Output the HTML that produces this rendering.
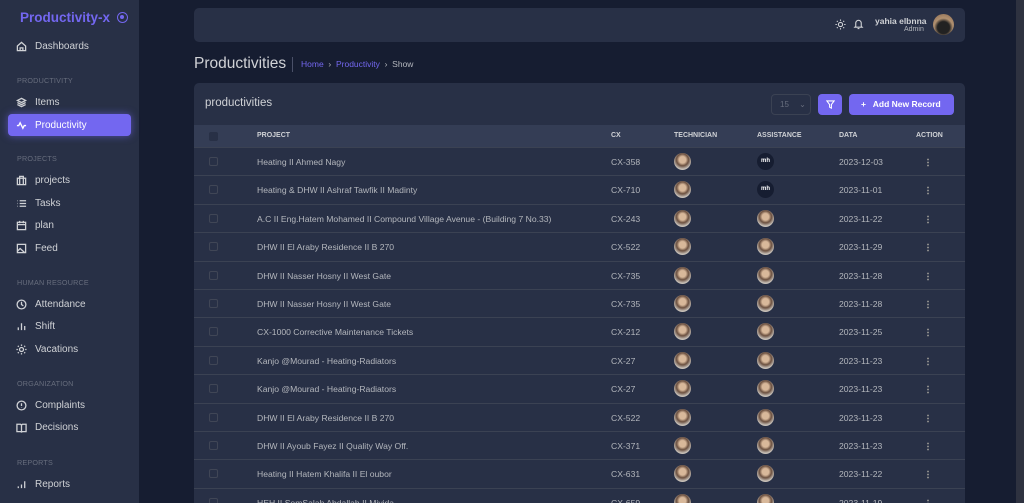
<!DOCTYPE html>
<html style="overflow:hidden;height:503px"><head><style>
*{box-sizing:border-box;margin:0;padding:0}
body{width:1024px;height:503px;overflow:hidden;background:#161d31;font-family:"Liberation Sans",sans-serif;color:#b4b7bd;position:relative}
.sb{position:absolute;left:0;top:0;width:139px;height:503px;background:#283046}
.logo{position:absolute;left:20px;top:10px;color:#7367f0;font-size:13.5px;font-weight:bold}
.tog{position:absolute;left:117px;top:12px;width:11px;height:11px;border:1.5px solid #7367f0;border-radius:50%}
.tog:after{content:"";position:absolute;left:2px;top:2px;width:4px;height:4px;border-radius:50%;background:#7367f0}
.it{position:absolute;left:16px;font-size:10px;color:#d0d2d6;display:flex;align-items:center}
.it svg{width:11px;height:11px;margin-right:8px;stroke:#d0d2d6;fill:none;stroke-width:1.4}
.sec{position:absolute;left:17px;font-size:7.2px;color:#676d7d;letter-spacing:.2px}
.act{position:absolute;left:8px;top:114px;width:123px;height:22px;background:#7367f0;border-radius:4px;box-shadow:0 0 8px rgba(115,103,240,.6);color:#fff;font-size:10px;display:flex;align-items:center;padding-left:8px}
.act svg{width:11px;height:11px;margin-right:8px;stroke:#fff;fill:none;stroke-width:1.5}
.nav{position:absolute;left:194px;top:8px;width:771px;height:34px;background:#283046;border-radius:5px}
.title{position:absolute;left:194px;top:55px;font-size:15.5px;color:#d0d2d6}
.bc{position:absolute;left:292px;top:57px;height:15px;border-left:1px solid #4a5068;padding-left:8px;font-size:8.5px;line-height:15px;color:#b4b7bd}
.bc span{color:#7367f0}
.card{position:absolute;left:194px;top:83px;width:771px;height:420px;background:#283046;border-radius:5px 5px 0 0;overflow:hidden}
.ch{position:absolute;left:11px;top:14px;font-size:11.5px;color:#d0d2d6}
.sel{position:absolute;left:577px;top:11px;width:40px;height:21px;border:1px solid #3b4253;border-radius:4px;font-size:8px;color:#676d7d;padding:5px 0 0 8px}
.fb{position:absolute;left:624px;top:11px;width:24px;height:21px;background:#7367f0;border-radius:4px}
.ab{position:absolute;left:655px;top:11px;width:105px;height:21px;background:#7367f0;border-radius:4px;color:#fff;font-size:8.5px;font-weight:bold;line-height:21px;padding-left:12px}
.th{position:absolute;left:0;top:42px;width:771px;height:22px;background:#343d55;font-size:7px;font-weight:bold;color:#d0d2d6}
.th div,.r div{position:absolute}
.r{position:absolute;left:0;width:771px;height:28.4px;border-top:1px solid #3b4253;font-size:8.6px;color:#b4b7bd}
.cb{width:9px;height:9px;border:1px solid #404656;border-radius:2px}
.av{width:17px;height:17px;border-radius:50%;background:radial-gradient(circle at 50% 40%,#d8b89a 0 25%,#6b5040 45%,#c7c0b8 70%)}
.mh{width:17px;height:17px;border-radius:50%;background:#161d31;color:#fff;font-size:6px;font-weight:bold;text-align:center;line-height:17px}
.dots{width:2px;height:9px;background:radial-gradient(circle,#888 0.9px,transparent 1px) 0 0/2px 3px}
.scroll{position:absolute;left:1016px;top:0;width:8px;height:503px;background:#2e3240}
</style></head><body>
<div class="sb">
<div class="logo">Productivity-x</div><div class="tog"></div>
<div class="it" style="top:41px"><svg viewBox="0 0 12 12"><path d="M1.5 5.5L6 1.5l4.5 4v5h-9z M4.5 10.5v-3h3v3"/></svg>Dashboards</div>
<div class="sec" style="top:76px">PRODUCTIVITY</div>
<div class="it" style="top:97px"><svg viewBox="0 0 12 12"><path d="M6 1.5l4.5 2.3L6 6 1.5 3.8z M1.5 6L6 8.3 10.5 6 M1.5 8.2L6 10.5l4.5-2.3"/></svg>Items</div>
<div class="act"><svg viewBox="0 0 12 12"><path d="M1 6h2l1.5-3 3 6 1.5-3h2"/></svg>Productivity</div>
<div class="sec" style="top:154px">PROJECTS</div>
<div class="it" style="top:175px"><svg viewBox="0 0 12 12"><rect x="1.5" y="3.5" width="9" height="7"/><path d="M4 3.5v-2h4v2M4 3.5v7M8 3.5v7"/></svg>projects</div>
<div class="it" style="top:198px"><svg viewBox="0 0 12 12"><path d="M4 3h7M4 6h7M4 9h7M1.5 3h.5M1.5 6h.5M1.5 9h.5"/></svg>Tasks</div>
<div class="it" style="top:220px"><svg viewBox="0 0 12 12"><rect x="1.5" y="2.5" width="9" height="8"/><path d="M1.5 5h9M4 1v2.5M8 1v2.5"/></svg>plan</div>
<div class="it" style="top:243px"><svg viewBox="0 0 12 12"><rect x="1.5" y="1.5" width="9" height="9"/><path d="M1.5 9l3-3 5 4.5"/></svg>Feed</div>
<div class="sec" style="top:278px">HUMAN RESOURCE</div>
<div class="it" style="top:299px"><svg viewBox="0 0 12 12"><circle cx="6" cy="6" r="4.8"/><path d="M6 3v3l2 1.5"/></svg>Attendance</div>
<div class="it" style="top:321px"><svg viewBox="0 0 12 12"><path d="M2.5 10V7M6 10V2.5M9.5 10V5.5"/></svg>Shift</div>
<div class="it" style="top:344px"><svg viewBox="0 0 12 12"><circle cx="6" cy="6" r="2.2"/><path d="M6 .5v1.5M6 10v1.5M.5 6H2M10 6h1.5M2 2l1 1M9 9l1 1M2 10l1-1M9 3l1-1"/></svg>Vacations</div>
<div class="sec" style="top:379px">ORGANIZATION</div>
<div class="it" style="top:400px"><svg viewBox="0 0 12 12"><circle cx="6" cy="6" r="4.8"/><path d="M6 3.5v3M6 8.2v.4"/></svg>Complaints</div>
<div class="it" style="top:422px"><svg viewBox="0 0 12 12"><path d="M1 2.5h4l1 1 1-1h4v8H7l-1 .5-1-.5H1zM6 3.5v7"/></svg>Decisions</div>
<div class="sec" style="top:458px">REPORTS</div>
<div class="it" style="top:479px"><svg viewBox="0 0 12 12"><path d="M2.5 10V8M6 10V6M9.5 10V2.5"/></svg>Reports</div>
</div>
<div class="nav">
<svg style="position:absolute;left:641px;top:11px" width="11" height="11" viewBox="0 0 12 12" fill="none" stroke="#d0d2d6" stroke-width="1.2"><circle cx="6" cy="6" r="2.3"/><path d="M6 .5v1.5M6 10v1.5M.5 6H2M10 6h1.5M2 2l1 1M9 9l1 1M2 10l1-1M9 3l1-1"/></svg>
<svg style="position:absolute;left:659px;top:10px" width="11" height="12" viewBox="0 0 12 12" fill="none" stroke="#d0d2d6" stroke-width="1.2"><path d="M3 8.5V5a3 3 0 016 0v3.5l1 1H2zM5 11h2"/></svg>
<div style="position:absolute;left:681px;top:8px;font-size:8.5px;font-weight:bold;color:#d0d2d6">yahia elbnna</div>
<div style="position:absolute;left:710px;top:18px;font-size:7px;color:#b4b7bd">Admin</div>
<div style="position:absolute;left:739px;top:6px;width:21px;height:21px;border-radius:50%;background:radial-gradient(circle at 50% 65%,#222 0 35%,#b09070 55%,#8a6a50)"></div>
</div>
<div class="title">Productivities</div>
<div class="bc"><span>Home</span> &nbsp;›&nbsp; <span>Productivity</span> &nbsp;›&nbsp; Show</div>
<div class="card">
<div class="ch">productivities</div>
<div class="sel">15 <span style="margin-left:8px">⌄</span></div>
<div class="fb"><svg style="position:absolute;left:8px;top:6px" width="9" height="9" viewBox="0 0 10 10" fill="none" stroke="#fff" stroke-width="1.2"><path d="M1 1h8L6 5v4L4 8V5z"/></svg></div>
<div class="ab">+ &nbsp; Add New Record</div>
<div class="th">
<div class="cb" style="left:15px;top:7px;background:#283046;border:none"></div>
<div style="left:63px;top:7px">PROJECT</div><div style="left:417px;top:7px">CX</div><div style="left:480px;top:7px">TECHNICIAN</div><div style="left:563px;top:7px">ASSISTANCE</div><div style="left:645px;top:7px">DATA</div><div style="left:722px;top:7px">ACTION</div>
</div>
<div id="rows"></div>
</div>
<div class="scroll"></div>
<script>
var d=[["Heating II Ahmed Nagy","CX-358","2023-12-03",1],["Heating &amp; DHW II Ashraf Tawfik II Madinty","CX-710","2023-11-01",1],["A.C II Eng.Hatem Mohamed II Compound Village Avenue - (Building 7 No.33)","CX-243","2023-11-22"],["DHW II El Araby Residence II B 270","CX-522","2023-11-29"],["DHW II Nasser Hosny II West Gate","CX-735","2023-11-28"],["DHW II Nasser Hosny II West Gate","CX-735","2023-11-28"],["CX-1000 Corrective Maintenance Tickets","CX-212","2023-11-25"],["Kanjo @Mourad - Heating-Radiators","CX-27","2023-11-23"],["Kanjo @Mourad - Heating-Radiators","CX-27","2023-11-23"],["DHW II El Araby Residence II B 270","CX-522","2023-11-23"],["DHW II Ayoub Fayez II Quality Way Off.","CX-371","2023-11-23"],["Heating II Hatem Khalifa II El oubor","CX-631","2023-11-22"],["HEH II SomSalah Abdallah II Mivida","CX-659","2023-11-19"]];
var h="";d.forEach(function(r,i){var t=64+i*28.4;h+='<div class="r" style="top:'+t+'px"><div class="cb" style="left:15px;top:9px"></div><div style="left:63px;top:9px">'+r[0]+'</div><div style="left:417px;top:9px">'+r[1]+'</div><div class="av" style="left:480px;top:5px"></div>'+(r[3]?'<div class="mh" style="left:563px;top:5px">mh</div>':'<div class="av" style="left:563px;top:5px"></div>')+'<div style="left:645px;top:9px">'+r[2]+'</div><div class="dots" style="left:733px;top:10px"></div></div>'});
document.getElementById("rows").innerHTML=h;
</script>
</body></html>
